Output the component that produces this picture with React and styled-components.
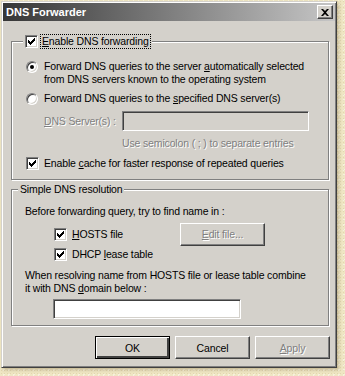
import React from 'react';
import styled, { createGlobalStyle, css } from 'styled-components';

const GlobalStyle = createGlobalStyle`
  html, body { margin: 0; padding: 0; }
  body {
    width: 345px;
    height: 376px;
    overflow: hidden;
    background-color: #efe6c3;
    background-image:
      radial-gradient(rgba(170, 150, 100, 0.2) 1px, transparent 1px),
      radial-gradient(rgba(255, 255, 255, 0.45) 1px, transparent 1px);
    background-size: 3px 3px, 5px 5px;
    background-position: 0 0, 1px 2px;
    font-family: "Liberation Sans", Arial, sans-serif;
    font-size: 10.5px;
    letter-spacing: -0.15px;
    color: #000;
  }
`;

const face = '#d4d1cb';

const Window = styled.div`
  box-sizing: border-box;
  width: 336px;
  height: 367px;
  margin: 1px 0 0 1px;
  padding: 1px;
  background: ${face};
  border: 1px solid;
  border-color: ${face} #404040 #404040 ${face};
  box-shadow: inset 1px 1px #fff, inset -1px -1px #808080, 2px 2px 3px rgba(110, 90, 50, 0.3);
  display: flex;
  flex-direction: column;
`;

const TitleBar = styled.div`
  height: 18px;
  display: flex;
  align-items: center;
  justify-content: space-between;
  padding: 0 2px 0 3px;
  background: linear-gradient(90deg, #363636, #c6c6c6);
  color: #fff;
  font-weight: bold;
  font-size: 11px;
  letter-spacing: 0;
`;

const CloseButton = styled.div`
  box-sizing: border-box;
  width: 16px;
  height: 14px;
  background: ${face};
  border: 1px solid;
  border-color: #fff #404040 #404040 #fff;
  box-shadow: inset -1px -1px #808080;
  display: flex;
  align-items: center;
  justify-content: center;
`;

const Body = styled.div`
  flex: 1;
  display: flex;
  flex-direction: column;
  padding: 20px 6px 0 8px;
`;

const Group = styled.div`
  display: flex;
  flex-direction: column;
  align-items: flex-start;
  border: 1px solid #808080;
  box-shadow: inset 1px 1px #fff, 1px 1px #fff;
  margin-top: ${(p) => p.$top || 0}px;
  padding: 0 8px ${(p) => p.$bottom}px ${(p) => p.$left}px;
`;

const Caption = styled.div`
  height: 15px;
  margin: -8px 0 0 ${(p) => p.$indent}px;
  padding: 0 2px;
  background: ${face};
  display: flex;
  align-items: center;
  line-height: 13px;
`;

const Row = styled.div`
  display: flex;
  align-items: ${(p) => (p.$top ? 'flex-start' : 'center')};
  margin-top: ${(p) => p.$mt || 0}px;
  margin-left: ${(p) => p.$ml || 0}px;
  width: ${(p) => (p.$w ? `${p.$w}px` : 'auto')};
  line-height: 13px;
`;

const Text = styled.div`
  line-height: 13px;
  margin-top: ${(p) => p.$mt || 0}px;
  margin-left: ${(p) => p.$ml || 0}px;
  width: ${(p) => (p.$w ? `${p.$w}px` : 'auto')};
  white-space: nowrap;
  ${(p) =>
    p.$disabled &&
    css`
      color: #808080;
      text-shadow: 1px 1px #fff;
    `}
`;

const Focus = styled.span`
  margin-left: 3px;
  padding: 0 1px;
  outline: 1px dotted #000;
  outline-offset: 0;
  line-height: 13px;
`;

const Box = styled.span`
  box-sizing: border-box;
  flex: none;
  width: 13px;
  height: 13px;
  background: #fff;
  border: 1px solid;
  border-color: #808080 #fff #fff #808080;
  box-shadow: inset 1px 1px #404040, inset -1px -1px ${face};
  display: flex;
  align-items: center;
  justify-content: center;
  margin-right: ${(p) => p.$gap ?? 5}px;
`;

const Radio = styled.span`
  box-sizing: border-box;
  flex: none;
  width: 12px;
  height: 12px;
  margin: 1px 6px 0 0;
  border-radius: 50%;
  background: #fff;
  border: 1px solid;
  border-color: #808080 #fff #fff #808080;
  box-shadow: inset 1px 1px #404040, inset -1px -1px ${face};
  display: flex;
  align-items: center;
  justify-content: center;
  &::after {
    content: '';
    width: 4px;
    height: 4px;
    border-radius: 50%;
    background: ${(p) => (p.$on ? '#000' : 'transparent')};
  }
`;

const Field = styled.div`
  box-sizing: border-box;
  width: ${(p) => p.$w}px;
  height: 20px;
  margin-left: ${(p) => p.$ml || 0}px;
  margin-top: ${(p) => p.$mt || 0}px;
  background: ${(p) => (p.$disabled ? face : '#fff')};
  border: 1px solid;
  border-color: #808080 #fff #fff #808080;
  box-shadow: inset 1px 1px #404040, inset -1px -1px ${face};
`;

const Button = styled.div`
  box-sizing: border-box;
  width: ${(p) => p.$w || 75}px;
  height: 23px;
  display: flex;
  align-items: center;
  justify-content: center;
  background: ${face};
  border: 1px solid;
  border-color: #fff #404040 #404040 #fff;
  box-shadow: inset -1px -1px #808080;
  ${(p) =>
    p.$default &&
    css`
      border-color: #000;
      box-shadow: inset 1px 1px #fff, inset -2px -2px #404040, inset -1px -1px #808080;
    `}
  ${(p) =>
    p.$disabled &&
    css`
      color: #808080;
      text-shadow: 1px 1px #fff;
    `}
`;

const Buttons = styled.div`
  display: flex;
  justify-content: flex-end;
  gap: 5px;
  margin: 10px -1px 0 0;
`;

const U = styled.u`
  text-underline-offset: 1px;
`;

const Check = () => (
  <svg width="7" height="7" viewBox="0 0 7 7">
    <path d="M0 2h1v1h1v1h1V3h1V2h1V1h1V0h1v3H6v1H5v1H4v1H3v1H2V6H1V5H0z" fill="#000" />
  </svg>
);

const CloseX = () => (
  <svg width="8" height="7" viewBox="0 0 8 7">
    <path d="M0 0h2l2 2 2-2h2L5 3.5 8 7H6L4 5 2 7H0l3-3.5z" fill="#000" />
  </svg>
);

const CheckBox = ({ gap }) => (
  <Box $gap={gap}>
    <Check />
  </Box>
);

export default function App() {
  return (
    <>
      <GlobalStyle />
      <Window>
        <TitleBar>
          <span>DNS Forwarder</span>
          <CloseButton>
            <CloseX />
          </CloseButton>
        </TitleBar>
        <Body>
          <Group $left={14} $bottom={9}>
            <Caption $indent={-3}>
              <CheckBox gap={0} />
              <Focus>
                <U>E</U>nable DNS forwarding
              </Focus>
            </Caption>
            <Row $top $mt={11}>
              <Radio $on />
              <Text>
                Forward DNS queries to the server <U>a</U>utomatically selected
                <br />
                from DNS servers known to the operating system
              </Text>
            </Row>
            <Row $top $mt={6}>
              <Radio />
              <Text>
                Forward DNS queries to the <U>s</U>pecified DNS server(s)
              </Text>
            </Row>
            <Row $mt={6} $ml={18}>
              <Text $disabled $w={78}>
                <U>D</U>NS Server(s) :
              </Text>
              <Field $w={187} $disabled />
            </Row>
            <Text $disabled $mt={6} $ml={96}>
              Use semicolon ( ; ) to separate entries
            </Text>
            <Row $mt={7}>
              <CheckBox />
              <Text>
                Enable <U>c</U>ache for faster response of repeated queries
              </Text>
            </Row>
          </Group>

          <Group $top={9} $left={13} $bottom={6}>
            <Caption $indent={-7}>Simple DNS resolution</Caption>
            <Text $mt={8}>Before forwarding query, try to find name in :</Text>
            <Row $mt={5} $ml={29}>
              <Row $w={126}>
                <CheckBox />
                <Text>
                  <U>H</U>OSTS file
                </Text>
              </Row>
              <Button $w={85} $disabled>
                <U>E</U>dit file...
              </Button>
            </Row>
            <Row $mt={2} $ml={29}>
              <CheckBox />
              <Text>
                DHCP <U>l</U>ease table
              </Text>
            </Row>
            <Text $mt={8}>
              When resolving name from HOSTS file or lease table combine
              <br />
              it with DNS <U>d</U>omain below :
            </Text>
            <Field $w={188} $ml={28} $mt={4} />
          </Group>

          <Buttons>
            <Button $default>OK</Button>
            <Button>Cancel</Button>
            <Button $disabled>
              <U>A</U>pply
            </Button>
          </Buttons>
        </Body>
      </Window>
    </>
  );
}
